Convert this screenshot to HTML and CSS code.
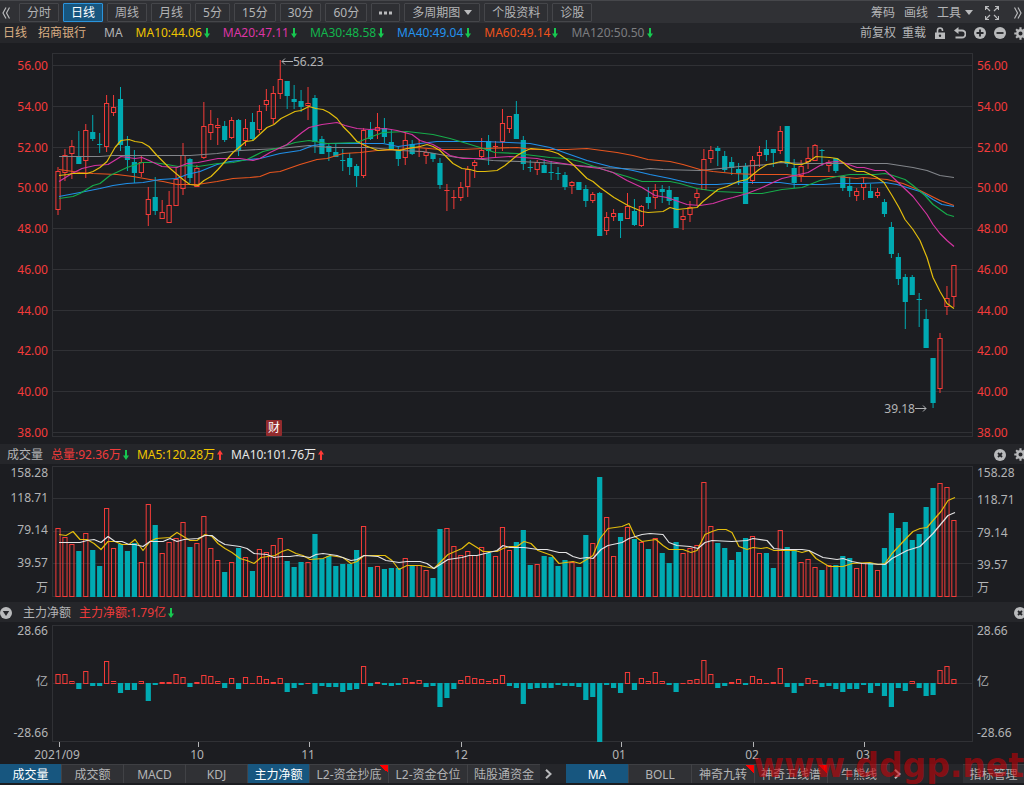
FILE: index.html
```html
<!DOCTYPE html>
<html lang="zh-CN">
<head>
<meta charset="utf-8">
<meta name="viewport" content="width=device-width, initial-scale=1">
<title>招商银行 日线</title>
<link rel="stylesheet" href="styles.css">
</head>
<body>
<svg class="defs" aria-hidden="true">
  <symbol id="down" viewBox="0 0 6 10"><path d="M2 0h2v5.500h2L3 10 0 5.500h2z" fill="#17c850"/></symbol>
  <symbol id="up" viewBox="0 0 6 10"><path d="M2 10h2V4.500h2L3 0 0 4.500h2z" fill="#ff3b37"/></symbol>
  <symbol id="gear" viewBox="0 0 14 14"><g fill="none" stroke="#b9babc"><circle cx="7" cy="7" r="3.500" stroke-width="2.600"/><path d="M7 .3v2.500M7 11.200v2.500M.3 7h2.500M11.200 7h2.500M2.300 2.300l1.700 1.700M10 10l1.700 1.700M11.700 2.300L10 4M4 10l-1.700 1.700" stroke-width="2.300"/></g></symbol>
  <symbol id="close" viewBox="0 0 12 12"><circle cx="6" cy="6" r="6" fill="#b9babc" stroke="none"/><path d="M4 4l4 4M8 4L4 8" stroke="#222327" stroke-width="1.800"/></symbol>
</svg>
<div class="app">
  <header class="toolbar">
    <button class="bare" aria-label="向左"><svg width="8" height="12" viewBox="0 0 8 12"><path d="M4 .5L1 6l3 5.500M7.500 .5l-3 5.500 3 5.500"/></svg></button>
    <nav class="periods">
      <button>分时</button><button class="on">日线</button><button>周线</button><button>月线</button><button>5分</button><button>15分</button><button>30分</button><button>60分</button>
      <button aria-label="更多"><svg width="13" height="4" viewBox="0 0 13 4"><path d="M0 .5h3v3H0zM5 .5h3v3H5zM10 .5h3v3h-3z" fill="#b9babc"/></svg></button>
      <button>多周期图<i class="caret"></i></button><button>个股资料</button><button>诊股</button>
    </nav>
    <div class="tools">
      <button class="bare">筹码</button><button class="bare">画线</button><button class="bare">工具<i class="caret"></i></button>
      <button class="bare full" aria-label="全屏"><svg width="14" height="14" viewBox="0 0 14 14"><path d="M.5 4V.5H4M.5 .5L5 5M10 .5h3.500V4M13.500 .5L9 5M.5 10v3.500H4M.5 13.500L5 9M13.500 10v3.500H10M13.500 13.500L9 9"/></svg></button>
      <button class="bare" aria-label="向右"><svg width="8" height="12" viewBox="0 0 8 12"><path d="M.5 .5l3 5.500-3 5.500M4 .5L7 6l-3 5.500"/></svg></button>
    </div>
  </header>

  <div class="info">
    <span class="name">日线</span><span class="name stock">招商银行</span><span class="ma">MA</span>
    <div class="values">
      <span class="yellow">MA10:44.06<svg class="arrow"><use href="#down"/></svg></span>
      <span class="pink">MA20:47.11<svg class="arrow"><use href="#down"/></svg></span>
      <span class="green">MA30:48.58<svg class="arrow"><use href="#down"/></svg></span>
      <span class="blue">MA40:49.04<svg class="arrow"><use href="#down"/></svg></span>
      <span class="orange">MA60:49.14<svg class="arrow"><use href="#down"/></svg></span>
      <span class="grey">MA120:50.50<svg class="arrow"><use href="#down"/></svg></span>
    </div>
    <div class="actions">
      <button class="bare">前复权</button><button class="bare">重载</button>
      <div class="icons">
        <button class="bare" aria-label="锁定"><svg width="12" height="12" viewBox="0 0 12 12"><path d="M3.500 6V3.500a2.500 2.500 0 0 1 5 0V4" stroke-width="1.600"/><path d="M1 5.500h10V12H1z" fill="#b9babc" stroke="none"/><circle cx="6" cy="8.700" r="1.200" fill="#25262a" stroke="none"/></svg></button>
        <button class="bare" aria-label="撤销"><svg width="12" height="12" viewBox="0 0 12 12"><path d="M3 3.500h5a3.500 3.500 0 0 1 0 7H1.500" stroke-width="1.900"/><path d="M0 3.500L4.500 0v7z" fill="#b9babc" stroke="none"/></svg></button>
        <button class="bare" aria-label="放大"><svg width="12" height="12" viewBox="0 0 12 12"><circle cx="6" cy="6" r="6" fill="#b9babc" stroke="none"/><path d="M2.500 6h7M6 2.500v7" stroke="#25262a" stroke-width="1.800"/></svg></button>
        <button class="bare" aria-label="缩小"><svg width="12" height="12" viewBox="0 0 12 12"><circle cx="6" cy="6" r="6" fill="#b9babc" stroke="none"/><path d="M2.500 6h7" stroke="#25262a" stroke-width="1.800"/></svg></button>
        <button class="bare" aria-label="设置"><svg width="13" height="13"><use href="#gear"/></svg></button>
      </div>
    </div>
  </div>

  <section class="panel price">
    <div class="axis left"><span>56.00</span><span>54.00</span><span>52.00</span><span>50.00</span><span>48.00</span><span>46.00</span><span>44.00</span><span>42.00</span><span>40.00</span><span>38.00</span></div>
    <div class="plot"><svg id="price" role="img" aria-label="K线图"></svg></div>
    <div class="axis"><span>56.00</span><span>54.00</span><span>52.00</span><span>50.00</span><span>48.00</span><span>46.00</span><span>44.00</span><span>42.00</span><span>40.00</span><span>38.00</span></div>
  </section>

  <div class="info sub">
    <span class="title">成交量</span>
    <div class="values near">
      <span class="red">总量:92.36万<svg class="arrow"><use href="#down"/></svg></span>
      <span class="yellow">MA5:120.28万<svg class="arrow"><use href="#up"/></svg></span>
      <span class="white">MA10:101.76万<svg class="arrow"><use href="#up"/></svg></span>
    </div>
    <div class="actions icons">
      <button class="bare" aria-label="关闭成交量"><svg width="12" height="12"><use href="#close"/></svg></button>
      <button class="bare" aria-label="成交量设置"><svg width="13" height="13"><use href="#gear"/></svg></button>
    </div>
  </div>
  <section class="panel volume">
    <div class="axis left"><span>158.28</span><span>118.71</span><span>79.14</span><span>39.57</span><span>万</span></div>
    <div class="plot"><svg id="volume" role="img" aria-label="成交量图"></svg></div>
    <div class="axis right"><span>158.28</span><span>118.71</span><span>79.14</span><span>39.57</span><span>万</span></div>
  </section>

  <div class="info sub fold">
    <button class="bare" aria-label="收起"><svg width="12" height="12" viewBox="0 0 12 12"><circle cx="6" cy="6" r="6" fill="#b9babc" stroke="none"/><path d="M2.800 4h6.400L6 9z" fill="#25262a" stroke="none"/></svg></button>
    <span class="title">主力净额</span>
    <div class="values near"><span class="red">主力净额:1.79亿<svg class="arrow"><use href="#down"/></svg></span></div>
    <div class="actions icons"><button class="bare" aria-label="关闭主力净额"><svg width="12" height="12"><use href="#close"/></svg></button></div>
  </div>
  <section class="panel flow">
    <div class="axis left"><span>28.66</span><span>亿</span><span>-28.66</span></div>
    <div class="plot"><svg id="flow" role="img" aria-label="主力净额图"></svg></div>
    <div class="axis"><span>28.66</span><span>亿</span><span>-28.66</span></div>
  </section>
  <div class="dates"><svg id="dates" role="img" aria-label="日期"></svg></div>

  <footer class="tabs">
    <nav class="group">
      <button class="on">成交量</button><button>成交额</button><button>MACD</button><button>KDJ</button><button class="on">主力净额</button><button class="wide new">L2-资金抄底</button><button class="wide">L2-资金仓位</button><button class="five">陆股通资金</button>
    </nav>
    <button class="bare next" aria-label="更多副图"><svg width="7" height="10" viewBox="0 0 7 10"><path d="M1 .8L5.500 5 1 9.200" stroke-width="2"/></svg></button>
    <nav class="group main">
      <button class="on">MA</button><button>BOLL</button><button class="new">神奇九转</button><button class="five new">神奇五线谱</button><button>牛熊线</button>
    </nav>
    <button class="bare more" aria-label="更多主图"><svg width="7" height="10" viewBox="0 0 7 10"><path d="M1 .8L5.500 5 1 9.200" stroke-width="2"/></svg></button>
    <button class="manage">指标管理</button>
  </footer>
  <div class="watermark">www.ddgp.net</div>
</div>
<script src="charts.js"></script>
</body>
</html>
```
FILE: styles.css
```css
* { box-sizing: border-box; }
body {
  margin: 0;
  background: #1c1d21;
  color: #b3b4b6;
  font: 12px/16px "Noto Sans", "Noto Sans CJK SC", sans-serif;
}
button {
  font: inherit;
  color: inherit;
  margin: 0;
  padding: 0;
  border: 0;
  background: none;
  white-space: nowrap;
}
.defs { display: none; }
.app {
  position: relative;
  display: flex;
  flex-direction: column;
  height: 100vh;
  min-height: 480px;
  overflow: hidden;
  padding-bottom: 2px;
}
.bare { display: flex; align-items: center; }
.bare svg { display: block; fill: none; stroke: #b9babc; stroke-width: 1.2; }

.toolbar {
  display: flex;
  align-items: center;
  height: 23px;
  flex: none;
  background: #303135;
  border-top: 1px solid #46474b;
  padding: 1px 2px 0 2px;
}
.periods { display: flex; gap: 4px; margin-left: 9px; }
.periods button {
  display: flex;
  align-items: center;
  height: 19px;
  padding: 0 7px;
  border: 1px solid #45464a;
  border-radius: 1px;
  background: #2e2f33;
}
.periods .on { background: #17567f; border-color: #2b94dc; color: #fff; }
.caret {
  border: 4px solid transparent;
  border-top: 5px solid #b9babc;
  border-bottom: 0;
  margin-left: 4px;
}
.tools { display: flex; margin-left: auto; gap: 9px; align-items: center; }
.tools .full { margin: 0 6px 0 3px; }

.info {
  display: flex;
  align-items: center;
  height: 20px;
  flex: none;
  background: #25262a;
  padding-left: 3px;
  white-space: nowrap;
}
.name { color: #d9ae83; }
.stock { margin-left: 11px; }
.ma { margin-left: 18px; }
.values { display: flex; gap: 13px; margin-left: 13px; }
.values span { display: flex; align-items: center; gap: 2px; }
.arrow { width: 6px; height: 10px; flex: none; }
.actions { display: flex; margin-left: auto; gap: 6px; }
.icons { display: flex; gap: 8px; margin-right: -3px; }
.actions .icons { margin-left: 2px; }
.sub { padding: 1px 0 0 7px; }
.near { margin-left: 8px; gap: 8px; }
.fold { padding-left: 0; }
.fold .title { margin-left: 11px; }
.fold .icons { margin-right: -2px; }
.yellow { color: #efc500; }
.pink { color: #dd35a6; }
.green { color: #12b64d; }
.blue { color: #2393ee; }
.orange { color: #f0531c; }
.grey { color: #7c7d80; }
.red { color: #f03b3b; }
.white { color: #e6e6e6; }

.panel { display: grid; grid-template-columns: 52px minmax(0, 1fr) 51px; min-height: 0; }
.plot { min-height: 0; }
.plot svg, .dates svg { display: block; width: 100%; height: 100%; overflow: visible; }
.axis { display: flex; flex-direction: column; justify-content: space-between; padding-left: 4px; }
.left { text-align: right; padding: 0 4px 0 0; }
.price { flex: 401 1 0; }
.price .plot { margin: 10px 0 7px; }
.price .axis { color: #f33b3b; padding-top: 15px; padding-bottom: 3px; }
.volume { flex: 138 1 0; }
.volume .plot { margin: 2px 0 5px; }
.volume .axis { display: grid; grid-template-columns: 1fr; grid-template-rows: 17fr 25fr 32fr 33fr 25fr; align-items: end; padding-bottom: 6px; }
.volume .right { grid-template-rows: 17fr 27fr 33fr 32fr 23fr; }
.flow { flex: 120 1 0; }
.flow .plot { margin-top: 3px; }
.flow .axis { padding-top: 1px; padding-bottom: 1px; }
.dates { flex: none; height: 22px; margin: 0 51px 0 52px; }

.candle-up { fill: none; stroke: #f53b38; }
.candle-down { fill: #00aab2; stroke: none; }
.candle-flat { fill: #f53b38; }
.wick-up { stroke: #f53b38; }
.wick-down { stroke: #00aab2; }
.grid { stroke: #303135; shape-rendering: crispEdges; }
.line { fill: none; stroke-width: 1.2; stroke-linejoin: round; }
.mark { fill: #b3b4b6; }
.mark-line { fill: none; stroke: #b3b4b6; }
.badge { fill: #922b2d; }
.badge-text { fill: #fff; }
.date { fill: #b3b4b6; text-anchor: middle; }

.tabs {
  display: flex;
  align-items: stretch;
  flex: none;
  height: 19px;
  background: #25262a;
}
.group { display: flex; gap: 1px; background: #414246; }
.group button, .manage {
  min-width: 61px;
  height: 19px;
  background: #303135;
  border-top: 1px solid #3e3f43;
  line-height: 17px;
}
.main button { min-width: 62px; }
.group .on { background: #17567f; color: #fff; border-color: #17567f; }
.group .wide { min-width: 78px; }
.group .five { min-width: 72px; }
.group .new {
  background-image: linear-gradient(45deg, transparent 50%, #ff0000 50%);
  background-size: 8px 8px;
  background-repeat: no-repeat;
  background-position: right top;
}
.next { margin: 0 14px 0 5px; }
.more { margin-left: 4px; }
.manage { margin-left: auto; }
.watermark {
  position: absolute;
  right: 0;
  bottom: 0;
  color: rgba(205, 0, 5, 0.58);
  font: bold 33px/38px "DejaVu Sans", sans-serif;
  pointer-events: none;
}
```
FILE: charts.js
```js
// Each candle: direction, body top, body bottom, high, low.
const candles = `r171,210,167,215 r155,173,149,181 r146,154,140,179 g156,164,131,164 r130,161,124,178 g132,139,115,141 g144,145,133,153 r103,147,95,152 r107,113,95,116 g99,145,87,151
g146,160,136,171 g162,173,150,183 r162,173,156,177 r199,215,187,226 g197,211,177,215 r212,219,200,219 r205,223,191,223 r179,206,167,206 r155,189,143,195 g159,178,158,183
r168,187,165,187 r126,158,102,159 r124,133,110,140 r125,128,118,145 g126,140,121,142 r120,138,117,139 g120,150,119,156 r128,141,119,146 g122,139,113,141 r111,130,105,133
r100,105,89,111 r93,119,86,124 r79,94,60,99 g81,96,81,109 g99,102,85,109 g101,107,90,112 r103,106,87,120 g98,142,95,153 g139,154,136,154 g146,152,144,161
g152,157,143,157 g160,161,149,171 g158,167,153,175 g166,176,164,187 r130,176,128,178 g130,139,122,140 r127,131,113,139 g128,137,118,143 g142,150,129,150 g150,159,146,166
r140,158,132,165 g144,154,140,155 r151,152,140,157 r152,156,149,164 g153,159,153,162 g163,185,158,189 r190,191,184,211 r197,198,190,209 r187,198,182,201 r169,187,166,197
r162,166,160,178 r150,157,138,159 g141,151,135,165 r146,147,141,158 r123,142,109,151 r116,129,116,133 g114,139,101,139 g140,164,136,170 g167,168,160,172 r162,170,160,175
g165,173,159,173 g172,173,161,180 g173,174,167,180 g175,187,172,190 r182,186,181,194 g182,190,182,190 g189,201,185,207 r194,201,192,203 g193,236,192,236 r217,231,212,235
r213,217,209,221 g213,221,213,238 r206,219,193,219 g211,225,199,226 r206,226,205,227 g197,203,187,209 r190,198,184,209 g189,192,185,203 g190,201,186,205 g197,228,197,228
r216,220,210,230 r207,215,201,222 r193,198,189,205 r159,190,149,190 r150,159,146,163 g148,151,146,166 g156,170,151,172 g162,168,157,175 g169,173,163,185 g166,204,163,204
r160,181,156,184 r152,156,146,167 g149,155,140,161 g149,153,149,167 r131,151,126,154 g126,164,126,167 g168,183,159,188 r166,176,160,182 r158,162,147,169 r145,161,144,161
g150,151,149,166 r162,166,160,172 g158,171,158,173 g176,188,176,191 g186,191,177,197 r191,196,188,201 r183,188,177,200 g191,198,184,198 r192,196,188,198 g202,214,199,217
g227,254,222,258 g257,279,253,285 g277,302,274,329 g277,295,275,295 g299,300,293,327 g319,348,309,348 g358,403,358,408 r338,389,333,393 r298,307,286,315 r265,297,265,307`
  .split(/\s+/).map(s => [s[0], ...s.slice(1).split(',').map(Number)]);

const volumes = [528,537,544,551,533,550,566,508,548,544,551,543,562,504,525,553,542,538,522,547,543,516,548,560,572,562,548,557,571,549,552,545,538,561,567,562,562,534,559,556,566,564,564,550,526,567,566,569,568,568,558,566,565,570,578,529,528,546,555,551,555,547,553,556,527,550,542,530,565,564,556,557,566,560,562,567,535,543,477,517,556,537,527,539,542,549,538,553,563,542,553,548,545,482,526,543,548,560,552,538,536,553,553,568,530,547,549,562,559,567,570,565,565,556,558,568,563,563,570,548,513,528,522,540,534,507,488,483,487,520];

// Signed bar lengths measured from the zero line.
const flows = [9,9,2,-6,12,-3,-3,22,2,-10,-7,-7,2,-18,-2,1,1,9,6,-4,1,8,7,2,-5,5,-6,6,0,7,4,1,5,-9,-5,-2,0,-11,-3,-4,-4,-9,-7,-6,17,-3,1,-2,-3,-2,5,1,3,-4,-3,-24,-15,-6,3,7,5,4,2,4,8,-3,-5,-21,-6,-5,-5,-5,-2,-3,-3,-4,-17,-14,-59,-2,-5,-10,11,-7,5,2,11,2,-2,-9,0,3,4,23,9,-5,-3,1,4,-2,7,4,0,1,15,-4,-10,-3,5,3,-4,-3,-6,-9,-6,-6,-2,-10,-3,-13,-24,-5,-8,2,-5,-13,-12,13,17,4];

const averages = {
  '#82858a': '59,156 100,156 113,155 160,155 190,155 217,153 240,150 259,149 280,148 309,145 330,147 350,147 370,147 400,150 423,151 440,154 457,157 473,158 493,160 520,161 557,163 577,165 600,167 623,168 642,169 650,168 663,169 700,170 720,168 740,166 769,164 780,162 807,163 840,163 887,163 913,167 927,170 940,175 954,177',
  '#e8551e': '59,169 80,172 93,173 117,174 133,176 150,179 163,181 177,184 197,184 217,181 233,178 250,177 260,176 270,172 280,171 300,164 317,159 327,158 343,153 360,152 377,150 400,149 417,147 440,149 463,149 483,148 517,147 533,149 567,149 587,148 617,152 633,155 648,159 670,161 683,164 700,169 713,171 733,173 757,174 787,174 800,176 837,176 857,178 863,177 887,179 903,183 920,190 940,200 954,205',
  '#2090ea': '59,196 80,192 100,188 113,185 127,183 143,182 160,179 177,178 187,174 200,171 217,164 230,161 260,158 280,153 300,150 313,145 328,143 383,143 398,146 420,143 437,141 463,141 483,141 509,142 530,143 550,147 567,153 587,160 610,166 633,170 650,174 670,178 687,182 700,184 717,184 740,182 780,182 795,184 823,184 837,183 863,183 885,182 897,184 907,187 920,191 927,195 933,199 942,204 954,206',
  '#16ac4a': '59,198 73,196 80,193 93,185 100,183 110,175 127,167 142,162 153,162 167,164 178,166 187,165 198,166 218,163 233,162 247,159 263,151 280,147 295,142 309,140 327,143 357,142 372,136 383,132 407,131 433,134 450,138 467,143 480,147 495,152 517,153 550,157 567,158 580,161 600,168 613,172 627,176 642,181 670,181 680,183 697,188 717,191 740,192 747,193 762,193 782,189 802,187 820,180 837,176 850,174 875,174 885,173 893,175 905,179 913,185 925,195 933,204 947,214 954,216',
  '#d534a2': '59,181 72,173 82,168 95,165 108,164 121,156 135,158 142,157 149,160 162,166 177,167 187,163 198,162 218,158 240,158 253,160 260,158 270,152 287,144 302,132 309,127 322,124 337,122 345,125 357,128 370,129 385,128 397,130 412,134 420,140 433,144 440,148 450,155 463,158 483,158 495,157 510,156 523,157 537,158 550,161 563,163 583,166 600,168 613,172 627,180 642,187 655,195 667,197 687,204 700,205 713,203 725,199 733,197 747,193 760,188 773,182 782,178 795,175 808,172 820,165 827,162 837,161 843,162 857,167 864,167 875,170 885,170 893,177 913,196 927,214 933,224 940,233 947,240 954,246',
  '#e3bd0c': '59,175 68,174 72,173 87,173 93,171 100,167 107,161 115,147 121,140 129,139 135,141 142,142 149,146 157,155 169,167 183,179 190,184 198,185 204,180 211,176 218,169 233,152 246,141 253,140 267,127 274,124 281,118 295,111 301,110 309,106 316,108 323,109 329,112 337,118 343,126 350,133 357,141 365,145 378,150 390,149 400,150 407,148 420,146 427,144 433,146 440,150 447,157 453,163 462,168 470,169 477,171 485,171 497,170 505,165 517,155 524,151 531,148 543,149 552,151 558,153 567,159 574,165 587,178 593,181 600,187 614,197 621,201 628,205 635,208 642,211 648,212 663,211 670,207 677,209 697,207 703,201 718,189 727,186 738,181 747,179 759,169 767,164 773,163 781,161 788,162 795,164 802,164 809,161 816,156 830,157 837,158 843,162 850,168 857,171 864,171 877,177 884,182 892,195 899,207 905,219 913,229 920,240 927,257 933,277 940,291 947,303 954,308'
};

const volumeAverages = {
  '#e3bd0c': '59,534 66,535 73,531 80,539 87,539 94,543 101,549 108,541 115,541 122,544 129,544 135,539 143,550 150,541 156,538 170,537 177,532 190,540 197,540 205,534 212,536 218,543 225,548 232,552 240,558 247,560 254,563 261,557 275,555 282,551 288,549 296,553 303,555 310,559 323,558 330,555 343,557 351,563 357,561 364,555 385,555 392,560 399,569 407,565 420,565 434,568 448,554 462,548 469,542 477,547 483,551 497,551 503,548 510,546 517,546 524,541 531,543 538,550 552,555 559,563 573,561 580,563 593,555 600,538 608,528 622,526 629,523 635,536 642,541 656,539 663,545 669,549 683,549 691,552 697,550 705,534 712,531 718,529 726,529 732,532 739,546 747,549 753,547 761,548 767,547 774,550 795,550 802,552 809,550 816,558 829,566 843,566 852,563 870,562 878,564 885,563 892,553 907,537 913,531 920,528 927,527 933,520 941,511 948,500 955,497',
  '#e3e3e4': '59,542 80,542 87,540 94,539 101,542 108,536 115,541 122,541 129,544 135,544 143,546 150,541 163,541 170,538 177,541 184,539 198,538 205,535 212,535 218,540 225,544 240,546 247,548 254,553 267,554 274,557 282,556 290,556 297,555 310,557 316,554 323,553 337,555 351,560 357,559 364,555 378,556 386,560 399,562 407,561 420,561 427,563 434,568 448,559 462,557 469,555 477,555 497,550 503,545 510,547 524,547 538,549 547,549 559,552 566,552 573,556 580,558 587,557 593,558 601,549 608,545 622,542 629,538 642,534 650,533 663,534 669,542 677,545 690,546 698,548 705,542 712,540 732,541 747,540 753,538 767,540 774,548 783,549 802,549 809,550 823,557 837,559 843,558 852,561 862,563 885,564 892,558 907,550 920,546 933,533 948,515 955,512'
};

const months = [[59, '2021/09', 57], [198, '10', 197], [309, '11', 308], [461, '12', 461], [621, '01', 619], [753, '02', 752], [864, '03', 863]];

// Maps data coordinates to the current size of a plot.
function plot(id, top, height) {
  const svg = document.getElementById(id);
  const kx = svg.clientWidth / 921, ky = svg.clientHeight / height;
  const x = v => (v - 52) * kx, y = v => (v - top) * ky;
  const parts = [];
  const api = {
    x, y, add: s => parts.push(s),
    hline: v => parts.push(`<path class="grid" d="M0 ${Math.round(y(v)) + 0.5}H${x(973)}"/>`),
    frame: () => parts.push(`<rect class="grid" fill="none" x=".5" y=".5" width="${x(973) - 1}" height="${y(top + height) - 1}"/>`),
    bar(i, dir, a, b) {
      const c = x(58 + 6.945 * i), ya = y(a), h = y(b) - ya, w = 5.2 * kx;
      if (dir === 'r' && h > 1.5) parts.push(`<rect class="candle-up" x="${c - w / 2 + 0.5}" y="${ya + 0.5}" width="${w - 1}" height="${h - 1}"/>`);
      else parts.push(`<rect class="${dir === 'r' ? 'candle-flat' : 'candle-down'}" x="${c - w / 2}" y="${ya}" width="${w}" height="${Math.max(h, 1)}"/>`);
    },
    wick(i, dir, a, b) {
      const c = x(58 + 6.945 * i);
      if (b > a) parts.push(`<path class="wick-${dir === 'r' ? 'up' : 'down'}" d="M${c} ${y(a)}V${y(b)}"/>`);
    },
    lines(set) {
      for (const [color, pts] of Object.entries(set)) {
        const p = pts.split(' ').map(s => { const [a, b] = s.split(','); return x(+a) + ',' + (y(+b) + 0.5); }).join(' ');
        parts.push(`<polyline class="line" stroke="${color}" points="${p}"/>`);
      }
    },
    done: () => { svg.innerHTML = parts.join(''); }
  };
  return api;
}

function draw() {
  let p = plot('price', 53, 384);
  p.frame();
  for (const v of [65, 106, 147, 187, 228, 269, 310, 350, 391, 432]) p.hline(v);
  candles.forEach(([d, a, b, hi, lo], i) => {
    p.wick(i, d, hi, a);
    p.wick(i, d, b, lo);
    p.bar(i, d, a, b);
  });
  p.lines(averages);
  const hx = p.x(282), hy = p.y(61) + 0.5, lx = p.x(926), ly = p.y(408) + 0.5;
  p.add(`<path class="mark-line" d="M${hx + 11} ${hy}h-11m3-3l-3 3 3 3"/><text class="mark" x="${hx + 11}" y="${hy + 4}">56.23</text>`);
  p.add(`<path class="mark-line" d="M${lx - 11} ${ly}h11m-3-3l3 3-3 3"/><text class="mark" text-anchor="end" x="${lx - 11}" y="${ly + 4}">39.18</text>`);
  p.add(`<rect class="badge" x="${p.x(266)}" y="${p.y(420)}" width="16" height="16" rx="1"/><text class="badge-text" x="${p.x(268)}" y="${p.y(432)}">财</text>`);
  p.done();

  p = plot('volume', 466, 131);
  p.frame();
  for (const v of [498, 531, 563]) p.hline(v);
  volumes.forEach((v, i) => p.bar(i, candles[i][0], v, 597));
  p.lines(volumeAverages);
  p.done();

  p = plot('flow', 625, 117);
  p.frame();
  p.hline(683);
  flows.forEach((v, i) => v < 0 ? p.bar(i, 'g', 683, 683 - v) : p.bar(i, 'r', 683 - v, 684));
  p.done();

  p = plot('dates', 742, 22);
  for (const [tx, label, cx] of months) {
    p.add(`<path class="mark-line" d="M${p.x(tx) + 0.5} 0V5"/><text class="date" x="${p.x(cx)}" y="17">${label}</text>`);
  }
  p.done();
}

draw();
window.addEventListener('resize', draw);
```
